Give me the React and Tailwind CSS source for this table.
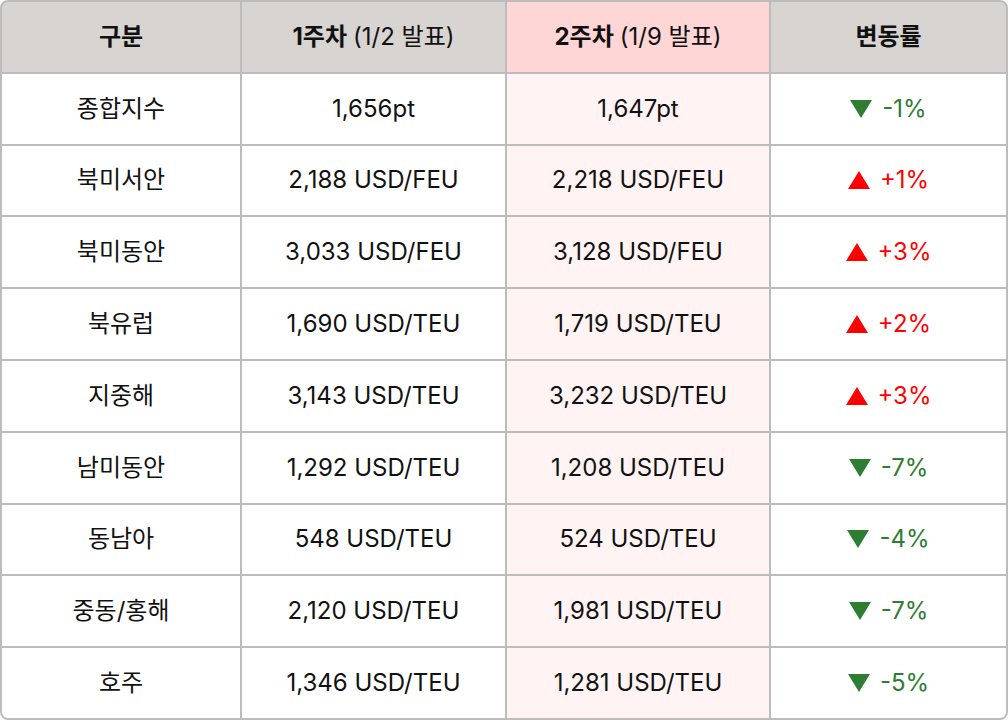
const rows = [
  ['종합지수', '1,656pt', '1,647pt', 'down', '-1%'],
  ['북미서안', '2,188 USD/FEU', '2,218 USD/FEU', 'up', '+1%'],
  ['북미동안', '3,033 USD/FEU', '3,128 USD/FEU', 'up', '+3%'],
  ['북유럽', '1,690 USD/TEU', '1,719 USD/TEU', 'up', '+2%'],
  ['지중해', '3,143 USD/TEU', '3,232 USD/TEU', 'up', '+3%'],
  ['남미동안', '1,292 USD/TEU', '1,208 USD/TEU', 'down', '-7%'],
  ['동남아', '548 USD/TEU', '524 USD/TEU', 'down', '-4%'],
  ['중동/홍해', '2,120 USD/TEU', '1,981 USD/TEU', 'down', '-7%'],
  ['호주', '1,346 USD/TEU', '1,281 USD/TEU', 'down', '-5%'],
];

function Change({ dir, value }) {
  const up = dir === 'up';
  return (
    <div className={`flex items-center gap-[10px] ${up ? 'text-[#ff0000]' : 'text-[#2e7d32]'}`}>
      <svg width="22" height="18" viewBox="0 0 22 18" className="fill-current">
        {up ? <polygon points="11,0 22,18 0,18" /> : <polygon points="0,0 22,0 11,18" />}
      </svg>
      <span>{value}</span>
    </div>
  );
}

export default function App() {
  const cell = 'flex items-center justify-center';
  return (
    <div className="w-[1008px] h-[720px] bg-white font-['Inter','Noto_Sans_CJK_KR',sans-serif] text-[24px] text-[#111]">
      <div className="h-full border-2 border-[#bcbcbc] rounded-[8px] overflow-hidden bg-[#bcbcbc] grid grid-cols-[238px_263px_262px_1fr] grid-rows-10 gap-[2px]">
        {/* Header */}
        <div className={`${cell} bg-[#d8d4d1] font-bold`}>구분</div>
        <div className={`${cell} bg-[#d8d4d1]`}>
          <span className="font-bold">1주차</span>
          <span className="ml-[6px]">(1/2 발표)</span>
        </div>
        <div className={`${cell} bg-[#ffd6d6]`}>
          <span className="font-bold">2주차</span>
          <span className="ml-[6px]">(1/9 발표)</span>
        </div>
        <div className={`${cell} bg-[#d8d4d1] font-bold`}>변동률</div>

        {rows.map(([name, w1, w2, dir, pct]) => (
          <div key={name} className="contents">
            <div className={`${cell} bg-white`}>{name}</div>
            <div className={`${cell} bg-white`}>{w1}</div>
            <div className={`${cell} bg-[#fff4f3]`}>{w2}</div>
            <div className={`${cell} bg-white`}>
              <Change dir={dir} value={pct} />
            </div>
          </div>
        ))}
      </div>
    </div>
  );
}
